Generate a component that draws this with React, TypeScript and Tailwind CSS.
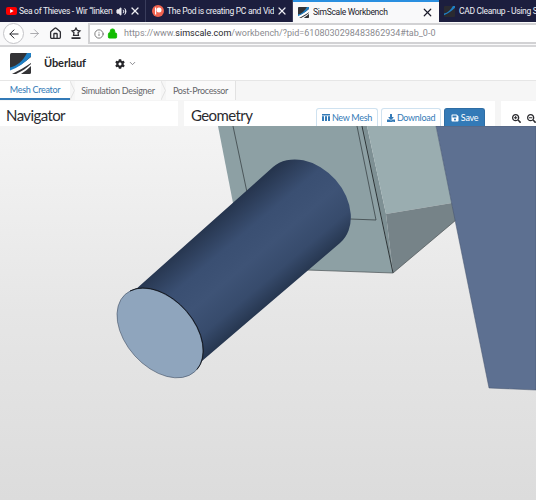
import React from "react";
import { ArrowLeft, ArrowRight, ChevronDown, House, Info, Lock, Volume2, X } from "lucide-react";
import { FaCog, FaDownload, FaSave, FaSearchMinus, FaSearchPlus } from "react-icons/fa";

function Logo({ size, dim = false }: { size: number; dim?: boolean }) {
  return (
    <svg width={size} height={size} viewBox="0 0 21 21" className="shrink-0">
      <rect width="21" height="21" rx="1.5" fill={dim ? "#2a2a30" : "#333336"} />
      {!dim && <path d="M0 16C8 14 15 9 21 4V10C15 14 8 18 2 21H0Z" fill="#ffffff" />}
      <path d="M0 14.5C7 13 13 8 17 0H21V3.5C15 9.5 8 14.5 0 17.5Z" fill="#1f7fc4" />
      {!dim && <path d="M6 21C12 18 17 15 21 11V13C18 16 14 19 11 21Z" fill="#ffffff" />}
    </svg>
  );
}

function BrowserTab({ title, icon, width, audio }: { title: string; icon: React.ReactNode; width: string; audio?: boolean }) {
  return (
    <div className={`${width} flex h-[22px] items-center gap-[2px] border-r border-[#3a3d5c] pl-[6px] pr-[4px] text-[#eeeef4]`}>
      {icon}
      <span className="flex-1 overflow-hidden whitespace-nowrap">{title}</span>
      {audio && <Volume2 size={11} className="shrink-0 fill-[#e8e8ee]" />}
      <X size={12} strokeWidth={2.4} className="shrink-0" />
    </div>
  );
}

function BrowserChrome() {
  return (
    <div className="font-['Roboto',sans-serif]">
      <div className="flex bg-[#1c1e3e] text-[8.5px] tracking-[-0.3px]">
        <BrowserTab
          width="w-[146px]"
          audio
          title="Sea of Thieves - Wir “linken"
          icon={
            <svg width="11" height="8" viewBox="0 0 11 8" className="shrink-0">
              <rect width="11" height="8" rx="2" fill="#f00" />
              <path d="M4.2 2 7.6 4 4.2 6Z" fill="#fff" />
            </svg>
          }
        />
        <BrowserTab
          width="w-[147px]"
          title="The Pod is creating PC and Vid"
          icon={
            <svg width="12" height="12" viewBox="0 0 12 12" className="mr-[1px] shrink-0">
              <circle cx="6" cy="6" r="6" fill="#f0634f" />
              <circle cx="7" cy="5" r="2.5" fill="#fff" />
              <rect x="3" y="2.5" width="1.2" height="7" fill="#fff" />
            </svg>
          }
        />
        <div className="flex h-[22px] w-[146px] items-center gap-[4px] border-t-2 border-[#2a8fe0] bg-[#f9f9fa] pl-[5px] pr-[5px] text-[#1b1b2a]">
          <Logo size={11} />
          <span className="flex-1 truncate">SimScale Workbench</span>
          <X size={13} strokeWidth={2.2} className="shrink-0" />
        </div>
        <div className="flex h-[22px] flex-1 items-center gap-[4px] overflow-hidden pl-[5px] text-[#eeeef4]">
          <Logo size={11} dim />
          <span className="whitespace-nowrap">CAD Cleanup - Using S</span>
        </div>
      </div>

      <div className="flex h-[23px] items-center bg-[#f9f9fa] pl-[3px]">
        <div className="flex h-[21px] w-[21px] items-center justify-center rounded-full border border-[#c4c4c8] bg-white">
          <ArrowLeft size={14} strokeWidth={1.7} className="text-[#2c2c32]" />
        </div>
        <ArrowRight size={13} strokeWidth={1.5} className="ml-[4px] text-[#9a9a9f]" />
        <House size={13} strokeWidth={2.4} className="ml-[8px] text-[#2c2c32]" />
        <svg width="12" height="13" viewBox="0 0 12 13" className="ml-[8px] text-[#2c2c32]">
          <path d="M6 1 7.3 3.4 10 3.8 8 5.7 8.5 8.3H3.5L4 5.7 2 3.8 4.7 3.4Z" fill="none" stroke="currentColor" strokeWidth="1.2" />
          <path d="M1.5 10.2H10.5V12H1.5Z" fill="currentColor" />
        </svg>
        <div className="ml-[6px] flex h-[21px] flex-1 items-center border-y-2 border-l-2 border-[#d2d2d4] bg-white pl-[4px] text-[9px]">
          <Info size={10} strokeWidth={1.8} className="text-[#555]" />
          <Lock size={11} strokeWidth={2} className="ml-[3px] fill-[#12bc00] text-[#12bc00]" />
          <span className="ml-[6px] whitespace-nowrap text-[#8a8a8f]">
            https://www.<span className="text-[#27272b]">simscale.com</span>/workbench/?pid=6108030298483862934#tab_0-0
          </span>
        </div>
      </div>
      <div className="h-[2px] bg-[#d6d6d8]" />
    </div>
  );
}

function TabChevron() {
  return (
    <svg width="5" height="19" viewBox="0 0 5 19" className="shrink-0">
      <path d="M0 0 4.5 9.5 0 19" fill="none" stroke="#e2e2e2" />
    </svg>
  );
}

function WorkbenchHeader() {
  return (
    <div className="font-['Lato',sans-serif]">
      <div className="flex h-[33px] items-center bg-white pl-[10px]">
        <Logo size={21} />
        <span className="ml-[13px] text-[11px] font-bold tracking-[-0.1px] text-[#26262a]">Überlauf</span>
        <FaCog size={10} className="ml-[29px] text-[#26262a]" />
        <ChevronDown size={9} strokeWidth={2} className="ml-[3px] text-[#66666c]" />
      </div>
      <div className="flex h-[20px] items-center border-t border-[#e6e6e6] bg-[#f6f6f6] text-[9px] tracking-[-0.3px] text-[#66666a]">
        <div className="flex h-full w-[70px] items-center justify-center border-b-2 border-[#337ab7] bg-white text-[#337ab7]">
          Mesh Creator
        </div>
        <TabChevron />
        <div className="flex h-full w-[86px] items-center justify-center whitespace-nowrap bg-[#fafafa]">
          Simulation Designer
        </div>
        <TabChevron />
        <div className="flex h-full w-[70px] items-center justify-center whitespace-nowrap border-r border-[#e2e2e2] bg-[#fafafa]">
          Post-Processor
        </div>
      </div>
      <div className="flex h-[26px] gap-[6px] bg-[#f5f5f5] pt-[1px]">
        <div className="w-[178px] bg-white pl-[6px] text-[15px] leading-[28px] tracking-[-0.6px] text-[#2b2b2f]">Navigator</div>
        <div className="flex w-[311px] items-start justify-between bg-white pl-[7px] pr-[10px]">
          <span className="text-[15px] leading-[28px] tracking-[-0.6px] text-[#2b2b2f]">Geometry</span>
          <div className="mt-[7px] flex gap-[3px] text-[9px] tracking-[-0.3px] text-[#337ab7]">
            <span className="flex h-[18px] w-[62px] items-center justify-center gap-[2px] rounded-t-[3px] border border-b-0 border-[#cfe2f0]">
              <svg width="8" height="7" viewBox="0 0 8 7" fill="currentColor">
                <rect width="8" height="1.5" />
                <rect y="2.2" width="2" height="4.8" />
                <rect x="3" y="2.2" width="2" height="4.8" />
                <rect x="6" y="2.2" width="2" height="4.8" />
              </svg>
              New Mesh
            </span>
            <span className="flex h-[18px] w-[60px] items-center justify-center gap-[2px] rounded-t-[3px] border border-b-0 border-[#cfe2f0]">
              <FaDownload size={8} />
              Download
            </span>
            <span className="flex h-[18px] w-[41px] items-center justify-center gap-[2px] rounded-t-[3px] border border-b-0 border-[#2e6da4] bg-[#337ab7] text-white">
              <FaSave size={8} />
              Save
            </span>
          </div>
        </div>
        <div className="flex flex-1 items-start gap-[6px] bg-white pl-[11px] pt-[13px] text-[#2b2b2f]">
          <FaSearchPlus size={9} className="shrink-0" />
          <FaSearchMinus size={9} className="shrink-0" />
        </div>
      </div>
    </div>
  );
}

function Viewport() {
  return (
    <div className="h-[374px] bg-gradient-to-b from-[#f4f4f4] via-[#e6e6e6] via-50% to-[#dcdcdc]">
      <svg width="536" height="374" viewBox="0 126 536 374" className="block">
        <defs>
          <linearGradient id="cyl" gradientUnits="userSpaceOnUse" x1="130" y1="290" x2="195" y2="367">
            <stop offset="0" stopColor="#26354e" />
            <stop offset="0.3" stopColor="#3a4f72" />
            <stop offset="0.55" stopColor="#3e5376" />
            <stop offset="0.8" stopColor="#374b6c" />
            <stop offset="1" stopColor="#26364f" />
          </linearGradient>
        </defs>

        {/* block */}
        <path d="M218 126H364L393 273 307 270 233 203Z" fill="#8da0a4" />
        <path d="M233 126 248 197M357 126 376 220 350 219" fill="none" stroke="#3b4447" strokeWidth="0.8" />
        <path d="M363 126H367L386 214 393 273Z" fill="#7e9094" />
        <path d="M367 126H436L452 203 386 214Z" fill="#9aadb0" />
        <path d="M386 214 452 203 456 220 393 273Z" fill="#768388" />
        <path d="M362 126 393 273" fill="none" stroke="#22282a" strokeWidth="0.9" />
        <path d="M393 273 456 220M307 270 393 273" fill="none" stroke="#4a5255" strokeWidth="0.7" />

        {/* plate */}
        <path d="M436 126H536V390L489 388Z" fill="#5d7091" stroke="#46546c" strokeWidth="0.5" />

        {/* cylinder */}
        <path d="M135 290 273 167A50 38 48 0 1 340 243L195 367Z" fill="url(#cyl)" />
        <ellipse cx="160" cy="333" rx="52" ry="34" transform="rotate(48 160 333)" fill="#8fa5bd" stroke="#48566a" strokeWidth="0.6" />
        <path d="M130 291A52 34 48 0 1 197 369.5" fill="none" stroke="#14181f" strokeWidth="1" />
      </svg>
    </div>
  );
}

export default function App() {
  return (
    <div className="h-[500px] w-[536px] overflow-hidden bg-white">
      <BrowserChrome />
      <WorkbenchHeader />
      <Viewport />
    </div>
  );
}
